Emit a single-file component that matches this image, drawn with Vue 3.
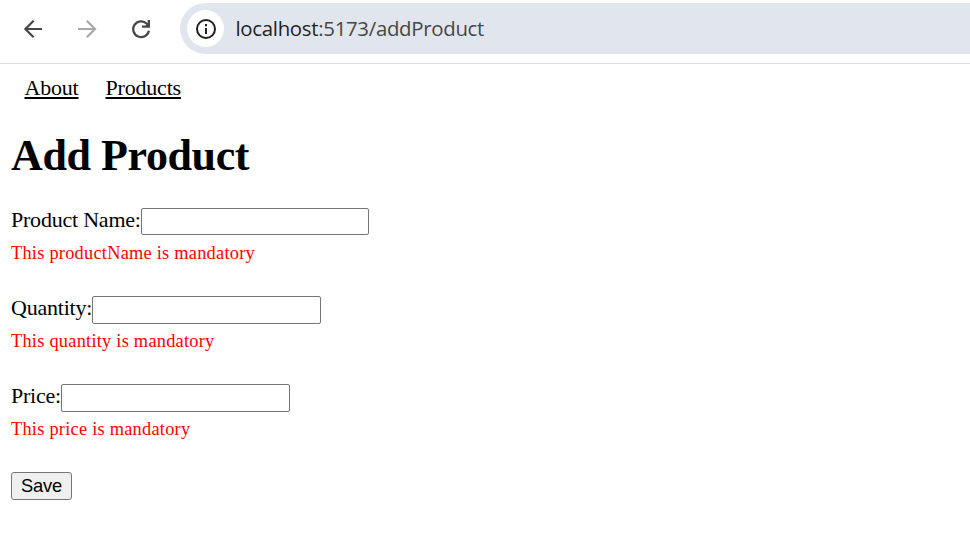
<script setup>
import { reactive } from 'vue'

const fields = [
  { key: 'productName', label: 'Product Name:' },
  { key: 'quantity', label: 'Quantity:' },
  { key: 'price', label: 'Price:' },
]
const form = reactive({ productName: '', quantity: '', price: '' })
</script>

<template>
  <div class="window">
    <header class="toolbar">
      <div class="controls">
        <svg class="icon" viewBox="0 0 20 20" fill="none" stroke="#474747" stroke-width="2.2">
          <path d="M19 10H2.8M10.6 1.8 2.4 10l8.2 8.2" />
        </svg>
        <svg class="icon" viewBox="0 0 20 20" fill="none" stroke="#a9a9a9" stroke-width="2.2">
          <path d="M1 10h16.6M9.8 1.8 18 10l-8.2 8.2" />
        </svg>
        <svg class="icon" viewBox="0 0 20 20" fill="none" stroke="#474747" stroke-width="2.3">
          <path d="M17.9 11.8A7.9 7.9 0 1 1 15.6 4.5L17.4 6.3" />
          <path d="M19 1v7.7h-8V6.4h3.6l2.1-2.1V1z" fill="#474747" stroke="none" />
        </svg>
      </div>
      <div class="address">
        <span class="site-info">
          <svg class="info" viewBox="0 0 20 20" fill="none" stroke="#1f1f1f" stroke-width="2">
            <circle cx="10" cy="10" r="9" />
            <path d="M10 9v6M10 5v2.2" />
          </svg>
        </span>
        <span class="url"><span class="host">localhost</span>:5173/addProduct</span>
      </div>
    </header>

    <main class="page">
      <nav class="links">
        <a href="#about">About</a>
        <a href="#products">Products</a>
      </nav>
      <h1>Add Product</h1>
      <form @submit.prevent>
        <div v-for="field in fields" :key="field.key" class="field">
          <div class="row">
            <label :for="field.key">{{ field.label }}</label>
            <input :id="field.key" v-model="form[field.key]" type="text" />
          </div>
          <div class="error">This {{ field.key }} is mandatory</div>
        </div>
        <button type="submit">Save</button>
      </form>
    </main>
  </div>
</template>

<style>
body {
  margin: 0;
  background: #fff;
}
</style>

<style scoped>
.window {
  height: 544px;
  overflow: hidden;
  color: #000;
  font-family: "Liberation Serif", serif;
  font-size: 22px;
}
.toolbar {
  box-sizing: border-box;
  display: flex;
  height: 64px;
  padding-top: 3px;
  border-bottom: 1px solid #dcdddf;
}
.controls {
  display: flex;
  align-items: center;
  gap: 34px;
  box-sizing: border-box;
  width: 180px;
  height: 52px;
  padding-left: 23px;
}
.icon {
  flex: none;
  width: 20px;
  height: 20px;
}
.address {
  display: flex;
  flex: 1;
  align-items: center;
  height: 51px;
  padding-left: 7px;
  background: #e1e6ee;
  border-radius: 26px 0 0 26px;
}
.site-info {
  display: flex;
  align-items: center;
  justify-content: center;
  width: 37px;
  height: 37px;
  border-radius: 50%;
  background: #fff;
}
.info {
  width: 20px;
  height: 20px;
}
.url {
  margin: -2px 0 0 11.5px;
  color: #474747;
  font-family: "Open Sans", sans-serif;
  font-size: 20.4px;
  letter-spacing: -0.3px;
  line-height: 30px;
}
.host {
  color: #1f1f1f;
}
.page {
  padding: 11px 11px 0;
}
.links {
  display: flex;
  gap: 27px;
  height: 25px;
  padding-left: 13.5px;
  letter-spacing: -0.2px;
  line-height: 25px;
}
.links a {
  color: #000;
  text-decoration-thickness: 2px;
  text-underline-offset: 2px;
}
h1 {
  margin: 31px 0 29px;
  height: 50px;
  font-size: 44px;
  letter-spacing: -0.4px;
  line-height: 50px;
}
.field {
  height: 88px;
}
.row {
  display: flex;
  align-items: flex-start;
  height: 33px;
}
label {
  margin-top: -3px;
  letter-spacing: -0.22px;
  line-height: 25px;
}
input {
  box-sizing: border-box;
  width: 229px;
  height: 28px;
  margin: -2px 0 0;
  padding: 1px 3px;
  border: 1px solid #767676;
  border-radius: 2px;
  background: #fff;
  font: 18.33px "Liberation Sans", sans-serif;
}
.field:first-child input {
  width: 228px;
  height: 27px;
}
.error {
  color: #f00;
  font-size: 18.33px;
  letter-spacing: 0.25px;
  line-height: 21px;
}
button {
  box-sizing: border-box;
  display: block;
  width: 61px;
  height: 28px;
  margin-top: -2px;
  padding: 0;
  border: 1px solid #767676;
  border-radius: 3px;
  background: #efefef;
  color: #000;
  font: 18.33px/24px "Liberation Sans", sans-serif;
  letter-spacing: -0.2px;
}
</style>
